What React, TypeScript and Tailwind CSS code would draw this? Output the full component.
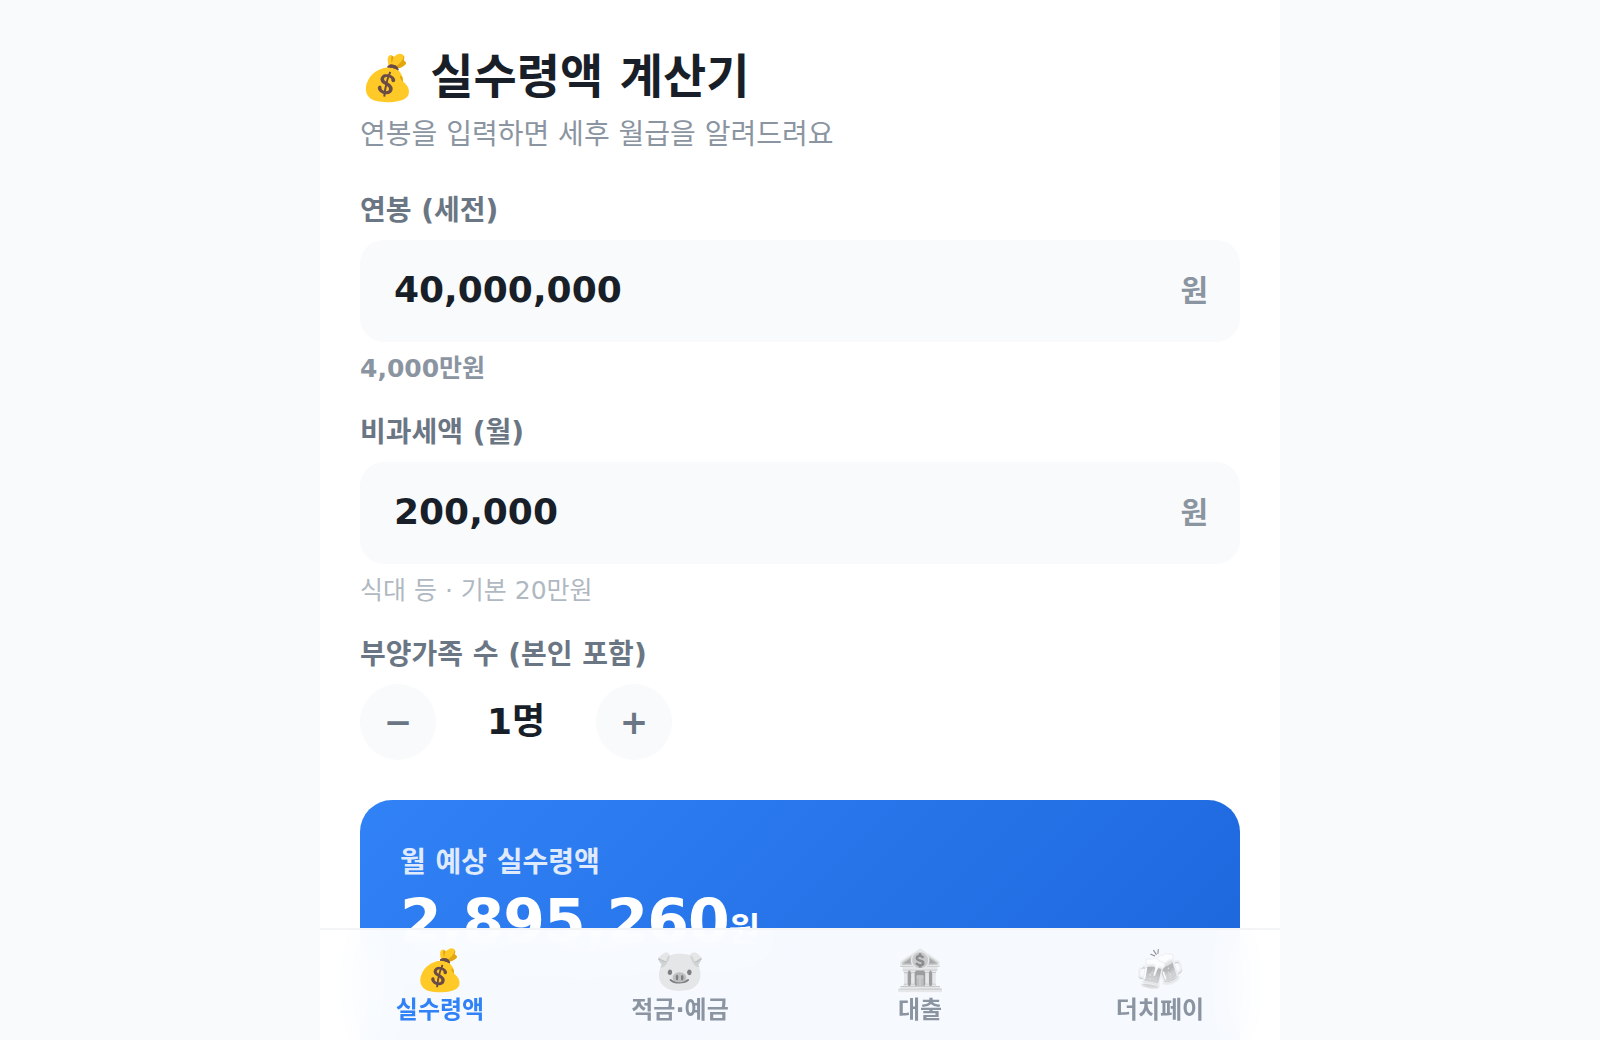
import { useState } from "react";
import clsx from "clsx";

const TABS = [
  { id: "salary", emoji: "💰", label: "실수령액" },
  { id: "savings", emoji: "🐷", label: "적금·예금" },
  { id: "loan", emoji: "🏦", label: "대출" },
  { id: "dutch", emoji: "🍻", label: "더치페이" },
];

const formatNumber = (value: string) => {
  const digits = value.replace(/\D/g, "");
  return digits ? Number(digits).toLocaleString("ko-KR") : "";
};

function MoneyField({
  id,
  label,
  value,
  onChange,
  children,
}: {
  id: string;
  label: string;
  value: string;
  onChange: (value: string) => void;
  children: React.ReactNode;
}) {
  return (
    <div className="mb-7">
      <label
        htmlFor={id}
        className="mb-[11px] block text-[28px] leading-9 font-semibold text-[#6b7684]"
      >
        {label}
      </label>
      <div className="flex items-center rounded-3xl border-2 border-transparent bg-[#f9fafb] py-7 pr-[30px] pl-8 focus-within:border-[#3182f6]">
        <input
          id={id}
          type="text"
          inputMode="numeric"
          value={value}
          onChange={(e) => onChange(formatNumber(e.target.value))}
          className="h-10 min-w-0 flex-1 self-start bg-transparent text-4xl font-bold text-[#191f28] outline-none"
        />
        <span className="text-[30px] leading-[42px] font-semibold text-[#8b95a1]">
          원
        </span>
      </div>
      {children}
    </div>
  );
}

export default function App() {
  const [tab, setTab] = useState("salary");
  const [salary, setSalary] = useState("40,000,000");
  const [taxFree, setTaxFree] = useState("200,000");
  const [family, setFamily] = useState(1);

  const salaryInMan = Math.floor(Number(salary.replace(/,/g, "")) / 10000);

  return (
    <div className="min-h-screen bg-[#f9fafb] font-['DejaVu_Sans','Noto_Sans_CJK_KR',sans-serif]">
      <main className="mx-auto min-h-screen max-w-[960px] bg-white px-10 pt-[47px] pb-32">
        <header className="mb-10">
          <h1 className="text-[44px] leading-[60px] font-bold text-[#191f28]">
            💰{" "}
            <span className="text-[47px] leading-[60px]">실수령액 계산기</span>
          </h1>
          <p className="mt-[9px] text-[28px] leading-9 text-[#8b95a1]">
            연봉을 입력하면 세후 월급을 알려드려요
          </p>
        </header>

        <MoneyField
          id="salary"
          label="연봉 (세전)"
          value={salary}
          onChange={setSalary}
        >
          <p className="mt-[9px] text-[25px] leading-9 font-semibold text-[#8b95a1]">
            {salaryInMan.toLocaleString("ko-KR")}만원
          </p>
        </MoneyField>

        <MoneyField
          id="tax-free"
          label="비과세액 (월)"
          value={taxFree}
          onChange={setTaxFree}
        >
          <p className="mt-[9px] text-[25px] leading-9 text-[#b0b8c1]">
            식대 등 · 기본 20만원
          </p>
        </MoneyField>

        <div className="mb-10" role="group" aria-labelledby="family-label">
          <div
            id="family-label"
            className="mb-[11px] text-[28px] leading-9 font-semibold text-[#6b7684]"
          >
            부양가족 수 (본인 포함)
          </div>
          <div className="flex items-center gap-10">
            <button
              type="button"
              onClick={() => setFamily((n) => Math.max(1, n - 1))}
              className="size-[76px] rounded-full bg-[#f9fafb] text-[34px] font-semibold text-[#6b7684]"
            >
              −
            </button>
            <span className="min-w-20 text-center text-4xl font-bold text-[#191f28]">
              {family}명
            </span>
            <button
              type="button"
              onClick={() => setFamily((n) => Math.min(11, n + 1))}
              className="size-[76px] rounded-full bg-[#f9fafb] text-[34px] font-semibold text-[#6b7684]"
            >
              +
            </button>
          </div>
        </div>

        <section className="rounded-[32px] bg-linear-[135deg,#3182f6,#1b64da] px-10 pt-[45px] pb-32 text-white">
          <p className="text-[28px] leading-9 font-semibold opacity-85">
            월 예상 실수령액
          </p>
          <p className="mt-1 text-6xl leading-[72px] font-extrabold tracking-[-1px]">
            2,895,260<span className="text-[34px] font-bold">원</span>
          </p>
        </section>
      </main>

      <nav className="fixed inset-x-0 bottom-0 mx-auto flex max-w-[960px] border-t-2 border-[#f2f4f6] bg-white/96 py-4 backdrop-blur-[20px]">
        {TABS.map(({ id, emoji, label }) => (
          <button
            key={id}
            type="button"
            onClick={() => setTab(id)}
            className={clsx(
              "flex flex-1 flex-col items-center text-2xl leading-7 font-semibold",
              tab === id ? "text-[#3182f6]" : "text-[#8b95a1]",
            )}
          >
            <span
              className={clsx(
                "mb-0.5 text-[40px] leading-12",
                tab !== id && "opacity-60 grayscale",
              )}
            >
              {emoji}
            </span>
            {label}
          </button>
        ))}
      </nav>
    </div>
  );
}
